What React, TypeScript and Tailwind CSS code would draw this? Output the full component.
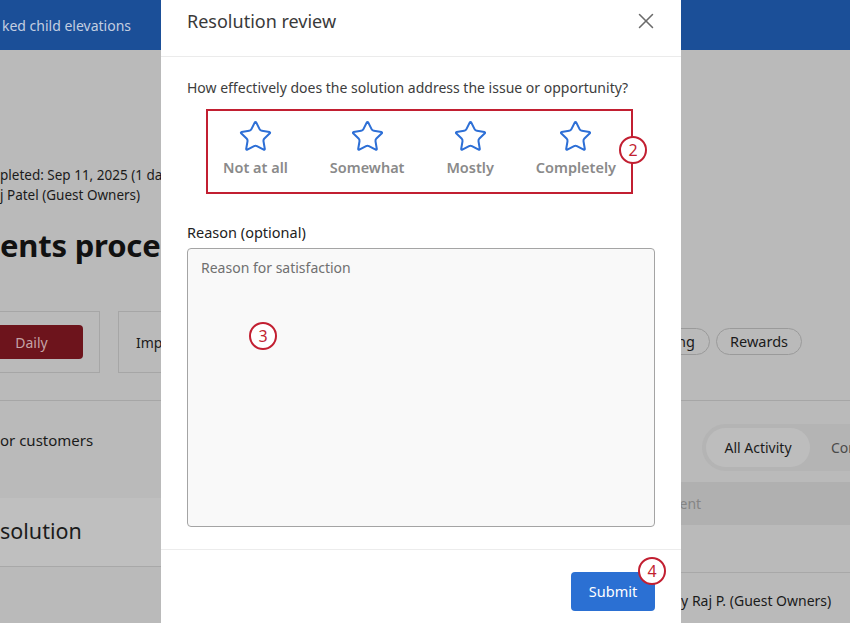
import React from "react";
import { Star, X } from "lucide-react";

function Badge({ n, className }: { n: string; className: string }) {
  return (
    <div
      className={`absolute flex h-[28px] w-[28px] items-center justify-center rounded-full border-[2.5px] border-[#c21f31] bg-white text-[16px] leading-none text-[#c21f31] ${className}`}
    >
      {n}
    </div>
  );
}

const options = ["Not at all", "Somewhat", "Mostly", "Completely"];

export default function App() {
  return (
    <div className="relative h-[623px] w-[850px] overflow-hidden bg-[#bababa] font-['Noto_Sans',sans-serif] text-[#1b1b1b]">
      {/* Background page (dimmed) */}
      <div className="flex h-[50px] items-center bg-[#1b4f98] pl-[2px] text-[14px] text-[#c3cee0]">
        ked child elevations
      </div>
      <div className="flex h-[261px] flex-col">
        <div className="mt-[115px] text-[13.5px] leading-[20px]">pleted: Sep 11, 2025 (1 day)</div>
        <div className="text-[13.5px] leading-[20px]">j Patel (Guest Owners)</div>
        <div className="mt-[20px] text-[31px] font-bold leading-[40px] tracking-[-0.2px] text-[#111]">
          ents process
        </div>
      </div>
      <div className="flex h-[90px] items-start justify-between border-b border-[#a6a6a6]">
        <div className="ml-[-37px] flex gap-[18px]">
          <div className="flex h-[62px] w-[137px] items-center border border-[#a6a6a6] px-[16px]">
            <div className="flex h-[34px] w-[103px] items-center justify-center rounded-[4px] bg-[#6d141c] text-[14px] text-[#c4a3a6]">
              Daily
            </div>
          </div>
          <div className="flex h-[62px] w-[140px] items-center border border-[#a6a6a6] px-[17px] text-[14px]">
            Impact
          </div>
        </div>
        <div className="mr-[48px] mt-[17px] flex gap-[6px]">
          <div className="flex h-[27px] items-center rounded-full border-[1.5px] border-[#9a9a9a] px-[14px] text-[14.5px]">
            Billing
          </div>
          <div className="flex h-[27px] items-center rounded-full border-[1.5px] border-[#9a9a9a] px-[13px] text-[14.5px]">
            Rewards
          </div>
        </div>
      </div>
      <div className="flex">
        <div className="w-[300px] shrink-0">
          <div className="h-[97px] pt-[27px] text-[15px] leading-[24px]">or customers</div>
          <div className="flex h-[69px] items-center border-b border-[#a8a8a8] bg-[#bfbfbf] pb-[2px] text-[21.5px]">
            solution
          </div>
        </div>
        <div className="ml-[360px] w-[190px] min-w-0 shrink-0">
          <div className="ml-[42px] mt-[23px] flex h-[47px] w-[300px] items-center rounded-l-full bg-[#b4b4b4] pl-[4px]">
            <div className="flex h-[39px] w-[104px] shrink-0 items-center justify-center rounded-full bg-[#bdbdbd] text-[14px]">
              All Activity
            </div>
            <div className="ml-[21px] whitespace-nowrap text-[14px] text-[#4a4a4a]">Comments</div>
          </div>
          <div className="mt-[11px] flex h-[43px] items-center bg-[#b0b0b0] text-[14px] text-[#858585]">
            <span className="ml-[-24px] whitespace-nowrap">Comment</span>
          </div>
          <div className="h-[48px] border-b border-[#a8a8a8]" />
          <div className="ml-[12px] mt-[18px] whitespace-nowrap text-[14px] leading-[20px]">By Raj P. (Guest Owners)</div>
        </div>
      </div>

      {/* Modal */}
      <div className="absolute left-[161px] top-0 flex h-[623px] w-[520px] flex-col bg-white text-[#333]">
        <div className="flex h-[57px] items-center justify-between border-b border-[#ebebeb] pb-[14px] pl-[26px] pr-[22px]">
          <div className="text-[18px] text-[#3a3a3a]">Resolution review</div>
          <X size={26} strokeWidth={1.4} className="text-[#6b6b6b]" />
        </div>
        <div className="flex flex-1 flex-col px-[26px]">
          <div className="mt-[21px] text-[14px] leading-[20px] text-[#3d3d3d]">
            How effectively does the solution address the issue or opportunity?
          </div>
          <div className="ml-[19px] mt-[11px] flex h-[85px] w-[427px] items-start justify-between border-[2.5px] border-[#c21f31] px-[15px] pt-[8px]">
            {options.map((o) => (
              <div key={o} className="flex flex-col items-center">
                <Star size={35} strokeWidth={1.4} className="text-[#2d6fd6]" />
                <div className="mt-[4px] text-[14.5px] font-semibold leading-[18px] text-[#8a8a8a]">{o}</div>
              </div>
            ))}
          </div>
          <div className="mt-[28px] text-[14.5px] leading-[20px] text-[#222]">Reason (optional)</div>
          <div className="mt-[6px] h-[279px] rounded-[4px] border border-[#a4a4a4] bg-[#f9f9f9] px-[13px] pt-[8px] text-[14px] text-[#707070]">
            Reason for satisfaction
          </div>
        </div>
        <div className="flex h-[74px] items-start justify-end border-t border-[#ececec] px-[26px] pt-[22px]">
          <div className="flex h-[39px] w-[84px] items-center justify-center rounded-[4px] bg-[#2b70d3] text-[14.5px] text-white">
            Submit
          </div>
        </div>
      </div>

      <Badge n="2" className="left-[619px] top-[136px]" />
      <Badge n="3" className="left-[249px] top-[322px]" />
      <Badge n="4" className="left-[638px] top-[557px]" />
    </div>
  );
}
